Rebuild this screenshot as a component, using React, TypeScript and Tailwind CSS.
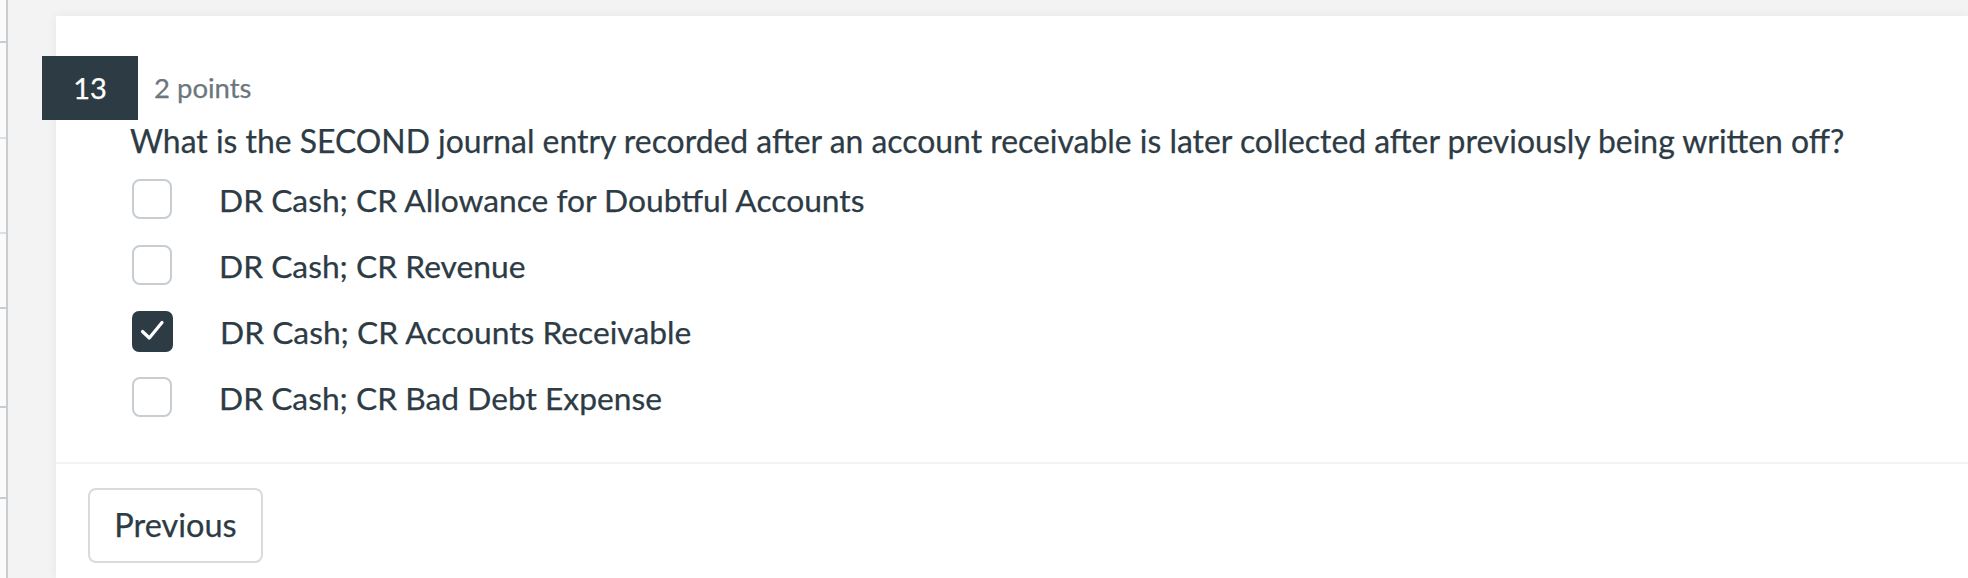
import React from "react";

const options = [
  { label: "DR Cash; CR Allowance for Doubtful Accounts", checked: false },
  { label: "DR Cash; CR Revenue", checked: false },
  { label: "DR Cash; CR Accounts Receivable", checked: true },
  { label: "DR Cash; CR Bad Debt Expense", checked: false },
];

function Box({ checked }: { checked: boolean }) {
  if (checked) {
    return (
      <div className="w-[41px] h-[41px] rounded-[7px] bg-[#2d3b45] flex items-center justify-center shrink-0">
        <svg width="41" height="41" viewBox="0 0 41 41">
          <path d="M10.5 20.5 L17.3 27 L30 11.5" fill="none" stroke="#ffffff" strokeWidth="3.2" strokeLinecap="round" strokeLinejoin="round" />
        </svg>
      </div>
    );
  }
  return <div className="w-[40px] h-[40px] rounded-[8px] border-2 border-[#c7cdd1] bg-white shrink-0" />;
}

export default function App() {
  return (
    <div
      className="w-full h-[578px] bg-[#f3f3f3] flex overflow-hidden text-[#2d3b45] [-webkit-text-stroke:0.25px_currentColor]"
      style={{ fontFamily: "Lato, 'Open Sans', sans-serif" }}
    >
      <div className="w-[6px] h-full bg-[#fbfbfb] flex flex-col shrink-0">
        <div className="h-[41px]" />
        <div className="h-[2px] bg-[#c7cdd1]" />
        <div className="h-[94px]" />
        <div className="h-[2px] bg-[#dde0e2]" />
        <div className="h-[93px]" />
        <div className="h-[2px] bg-[#dde0e2]" />
        <div className="h-[73px]" />
        <div className="h-[2px] bg-[#c7cdd1]" />
        <div className="h-[97px]" />
        <div className="h-[2px] bg-[#c7cdd1]" />
        <div className="h-[89px]" />
        <div className="h-[2px] bg-[#c7cdd1]" />
      </div>
      <div className="w-[2px] h-full bg-[#c7cdd1] shrink-0" />
      <div className="flex-1 pl-[48px] pt-[16px] flex">
        <div className="flex-1 bg-white shadow-[0_0_10px_rgba(0,0,0,0.06)] flex flex-col">
          <div className="pt-[40px] flex items-center">
            <div className="-ml-[14px] w-[96px] h-[64px] bg-[#2d3b45] text-white text-[29px] flex items-center justify-center">
              13
            </div>
            <div className="ml-[16px] text-[27.5px] text-[#6b7780]">2 points</div>
          </div>
          <div className="ml-[74px] mt-[1px] text-[31.9px] leading-[40px]">
            What is the SECOND journal entry recorded after an account receivable is later collected after previously being written off?
          </div>
          <div className="ml-[76px] mt-[18px] flex flex-col gap-[26px]">
            {options.map((o) => (
              <div key={o.label} className="flex items-center h-[40px]">
                <Box checked={o.checked} />
                <div className="ml-[47px] text-[31.75px] leading-[40px] pt-[1px]">{o.label}</div>
              </div>
            ))}
          </div>
          <div className="mt-[45px] h-[2px] bg-[#f3f3f3]" />
          <div className="ml-[32px] mt-[24px]">
            <button className="w-[175px] h-[75px] border-2 border-[#d8dbdd] rounded-[8px] bg-white text-[32.5px] text-[#2d3b45] flex items-center justify-center">
              Previous
            </button>
          </div>
        </div>
      </div>
    </div>
  );
}
